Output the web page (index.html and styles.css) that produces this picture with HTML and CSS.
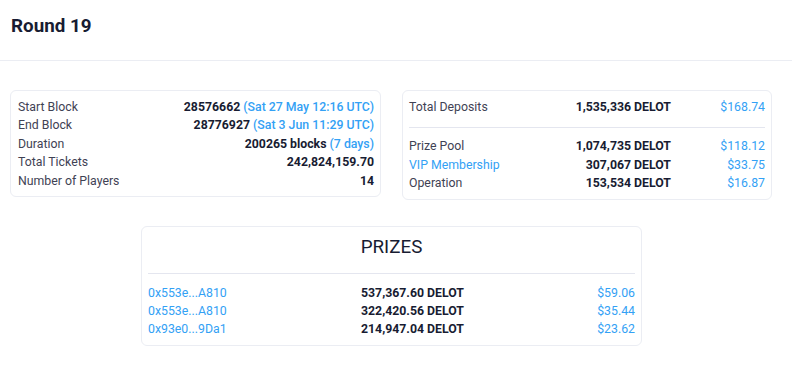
FILE: index.html
```html
<!DOCTYPE html>
<html>
<head>
<meta charset="utf-8">
<link rel="stylesheet" href="styles.css">
</head>
<body>
<header class="page-header">
  <h1 class="title">Round 19</h1>
</header>
<main class="content">
  <section class="stats">
    <div class="card card-info">
      <div class="row"><span class="label">Start Block</span><span class="value">28576662 <span class="link">(Sat 27 May 12:16 UTC)</span></span></div>
      <div class="row"><span class="label">End Block</span><span class="value">28776927 <span class="link">(Sat 3 Jun 11:29 UTC)</span></span></div>
      <div class="row"><span class="label">Duration</span><span class="value">200265 blocks <span class="link">(7 days)</span></span></div>
      <div class="row"><span class="label">Total Tickets</span><span class="value">242,824,159.70</span></div>
      <div class="row"><span class="label">Number of Players</span><span class="value">14</span></div>
    </div>
    <div class="card card-pool">
      <div class="pool-row"><span class="label">Total Deposits</span><span class="amount">1,535,336 DELOT</span><span class="usd">$168.74</span></div>
      <div class="divider pool-divider"></div>
      <div class="pool-row"><span class="label">Prize Pool</span><span class="amount">1,074,735 DELOT</span><span class="usd">$118.12</span></div>
      <div class="pool-row"><span class="label link">VIP Membership</span><span class="amount">307,067 DELOT</span><span class="usd">$33.75</span></div>
      <div class="pool-row"><span class="label">Operation</span><span class="amount">153,534 DELOT</span><span class="usd">$16.87</span></div>
    </div>
  </section>
  <section class="card prizes">
    <h2 class="prizes-title">PRIZES</h2>
    <div class="divider prizes-divider"></div>
    <div class="prize-row"><span class="link">0x553e...A810</span><span class="amount">537,367.60 DELOT</span><span class="usd">$59.06</span></div>
    <div class="prize-row"><span class="link">0x553e...A810</span><span class="amount">322,420.56 DELOT</span><span class="usd">$35.44</span></div>
    <div class="prize-row"><span class="link">0x93e0...9Da1</span><span class="amount">214,947.04 DELOT</span><span class="usd">$23.62</span></div>
  </section>
</main>
</body>
</html>
```

FILE: styles.css
```css
* { box-sizing: border-box; }
html, body { margin: 0; padding: 0; background: #ffffff; }
body {
  font-family: Roboto, "Liberation Sans", sans-serif;
  font-size: 12.3px;
  line-height: 1.5;
  color: #3f4254;
}
.page-header {
  height: 61px;
  border-bottom: 1px solid #ebedf3;
  padding: 14px 11px 0;
}
.title {
  margin: 0;
  font-size: 18.8px;
  line-height: 24px;
  font-weight: 700;
  color: #181c32;
}
.content { padding-top: 29px; }
.stats {
  display: grid;
  grid-template-columns: 371px 370px;
  column-gap: 21px;
  padding-left: 10px;
  align-items: start;
}
.card {
  border: 1px solid #ebedf3;
  border-radius: 6px;
  background: #fff;
}
.card-info { padding: 7px 6px 6px 7px; }
.row { display: flex; justify-content: space-between; }
.value { font-weight: 700; color: #181c32; }
.value .link { font-weight: 500; }
.link { color: #33a1f5; }
.label.link { color: #33a1f5; }
.card-pool { padding: 7px 6px 6px 6px; }
.pool-row {
  display: grid;
  grid-template-columns: 1fr auto 94px;
}
.amount { font-weight: 700; color: #181c32; text-align: right; }
.usd { color: #33a1f5; text-align: right; }
.divider { height: 1px; background: #e4e6ef; }
.pool-divider { margin: 11px 0 9px; }
.prizes {
  width: 501px;
  margin: 26px 0 0 141px;
  padding: 8px 6px 7px;
}
.prizes-title {
  margin: 0;
  text-align: center;
  font-size: 18.8px;
  line-height: 24px;
  font-weight: 400;
  color: #181c32;
}
.prizes-divider { margin: 14px 0 10px; }
.prize-row {
  display: grid;
  grid-template-columns: 213px auto 1fr;
  line-height: 18px;
}
.prize-row .amount { text-align: left; }
```
